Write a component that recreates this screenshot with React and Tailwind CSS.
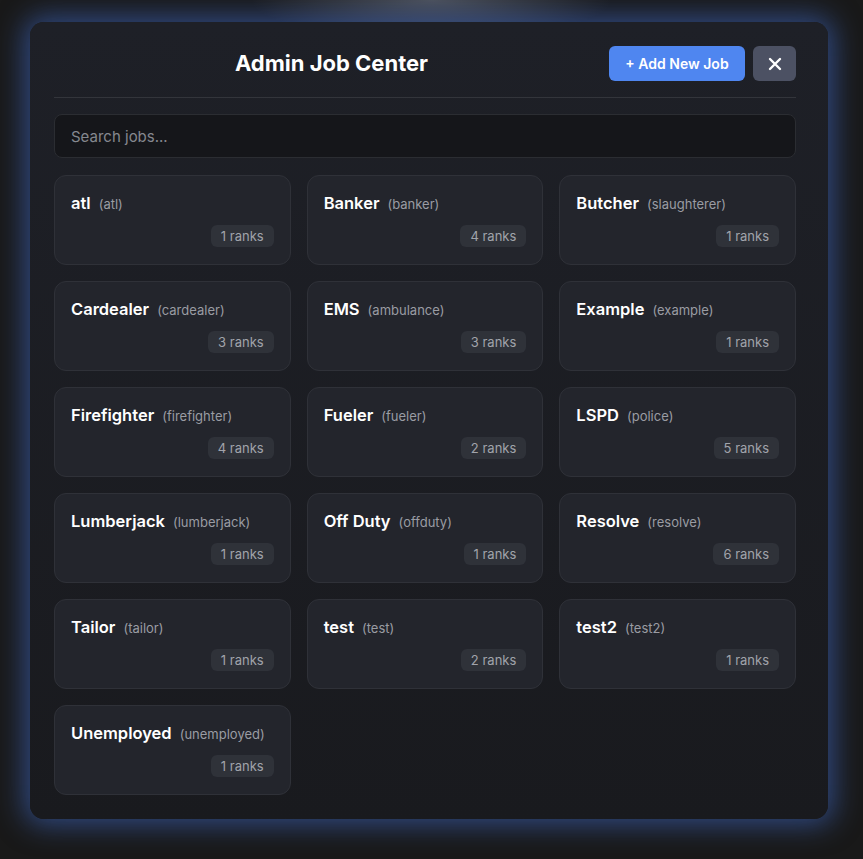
import React from 'react';

const jobs = [
  { label: 'atl', name: 'atl', ranks: 1 },
  { label: 'Banker', name: 'banker', ranks: 4 },
  { label: 'Butcher', name: 'slaughterer', ranks: 1 },
  { label: 'Cardealer', name: 'cardealer', ranks: 3 },
  { label: 'EMS', name: 'ambulance', ranks: 3 },
  { label: 'Example', name: 'example', ranks: 1 },
  { label: 'Firefighter', name: 'firefighter', ranks: 4 },
  { label: 'Fueler', name: 'fueler', ranks: 2 },
  { label: 'LSPD', name: 'police', ranks: 5 },
  { label: 'Lumberjack', name: 'lumberjack', ranks: 1 },
  { label: 'Off Duty', name: 'offduty', ranks: 1 },
  { label: 'Resolve', name: 'resolve', ranks: 6 },
  { label: 'Tailor', name: 'tailor', ranks: 1 },
  { label: 'test', name: 'test', ranks: 2 },
  { label: 'test2', name: 'test2', ranks: 1 },
  { label: 'Unemployed', name: 'unemployed', ranks: 1 },
];

const JobCard = ({ job }) => (
  <div className="h-[90px] rounded-xl border border-[#2f3138] bg-[#23252c] px-4 pt-4 pb-[17px] flex flex-col">
    <div className="flex items-baseline gap-2 h-[22px]">
      <span className="text-[16.5px] font-semibold text-white leading-[22px]">{job.label}</span>
      <span className="text-[13px] text-[#9a9ca3]">({job.name})</span>
    </div>
    <div className="mt-auto flex justify-end">
      <span className="h-[22px] px-2.5 rounded-md bg-[#2f3239] text-[13px] leading-[22px] text-[#a1a4ab]">
        {job.ranks} ranks
      </span>
    </div>
  </div>
);

export default function App() {
  return (
    <div
      className="min-h-screen w-full bg-[#191919] bg-[radial-gradient(ellipse_180px_40px_at_50%_0%,rgba(170,180,200,0.35),transparent)] pt-[22px] pl-[30px] pb-10"
      style={{ fontFamily: 'Inter, "Noto Sans", sans-serif' }}
    >
      <div className="w-[798px] rounded-[14px] bg-gradient-to-b from-[#1e2027] to-[#191a1e] pl-6 pr-8 pt-6 pb-6 shadow-[0_0_28px_6px_rgba(70,120,230,0.5)]">
        {/* Header */}
        <div className="flex items-center gap-2 pb-4 border-b border-[#33353b]">
          <h1 className="flex-1 ml-2 text-center text-[22px] font-bold text-white">Admin Job Center</h1>
          <button className="h-[35px] w-[136px] rounded-md bg-[#4f86f0] text-[14px] font-semibold text-white">
            + Add New Job
          </button>
          <button className="h-[35px] w-[43px] rounded-md bg-[#4c5163] flex items-center justify-center text-white">
            <svg width="14" height="14" viewBox="0 0 14 14" fill="none" stroke="currentColor" strokeWidth="2.4" strokeLinecap="round">
              <path d="M2 2L12 12M12 2L2 12" />
            </svg>
          </button>
        </div>

        {/* Search */}
        <input
          type="text"
          placeholder="Search jobs..."
          className="mt-4 block w-full h-[44px] rounded-lg border border-[#2b2d32] bg-[#15161a] px-4 text-[15px] text-gray-100 placeholder-[#85888f] outline-none"
        />

        {/* Job grid */}
        <div className="mt-[17px] grid grid-cols-3 gap-4">
          {jobs.map((job) => (
            <JobCard key={job.name} job={job} />
          ))}
        </div>
      </div>
    </div>
  );
}
